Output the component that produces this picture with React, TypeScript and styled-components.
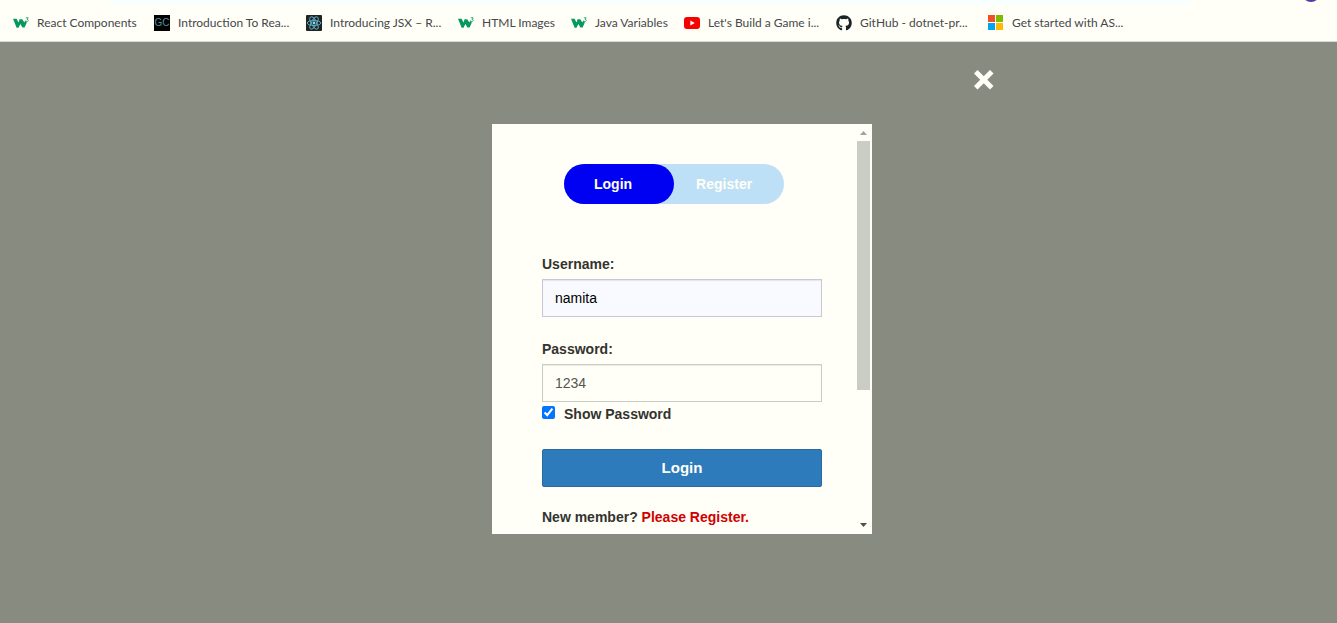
import React, { useState } from "react";
import styled, { createGlobalStyle } from "styled-components";
import { FaGithub } from "react-icons/fa";

const GlobalStyle = createGlobalStyle`
  *, *::before, *::after { box-sizing: border-box; }
  body {
    margin: 0;
    background: #888b80;
    color: #333330;
    font: 14px/20px "Liberation Sans", Arial, sans-serif;
  }
  button, input { font: inherit; }
`;

const Page = styled.div`
  display: flex;
  flex-direction: column;
  min-height: 100vh;
  overflow: hidden;
`;

const BrowserBar = styled.header`
  background: #fffff7;
  border-bottom: 1px solid #d3dcd8;
`;

const ToolbarEdge = styled.div`
  display: flex;
  height: 5px;
  padding: 0 17px 0 108px;
  overflow: hidden;
`;

const AddressField = styled.div`
  flex: 1;
  margin-right: 112px;
  background: #f7ffff;
  border-radius: 0 0 8px 8px;
`;

const Avatar = styled.div`
  width: 18px;
  height: 18px;
  margin-top: -16px;
  border-radius: 50%;
  background: #5a35b0;
`;

const Bookmarks = styled.nav`
  display: flex;
  height: 36px;
  padding: 0 13px;
  overflow: hidden;
`;

const Bookmark = styled.a<{ $size: "short" | "medium" | "long" }>`
  display: flex;
  flex: none;
  align-items: center;
  gap: 8px;
  width: ${({ $size }) => ({ short: 113, medium: 141, long: 152 })[$size]}px;
  color: #45474b;
  font: 12px/16px Lato, "Noto Sans", sans-serif;
  text-decoration: none;
  white-space: nowrap;

  svg { flex: none; }
`;

const LetterIcon = styled.span`
  flex: none;
  width: 16px;
  height: 16px;
  overflow: hidden;
  background: #000;
  color: #4f9299;
  font: 10px/16px "Liberation Sans", sans-serif;
  text-align: center;
`;

const Overlay = styled.main`
  flex: 1;
  display: flex;
  flex-direction: column;
  align-items: center;
  padding: 28px 0 28px 27px;
`;

const CloseRow = styled.div`
  display: flex;
  justify-content: flex-end;
  width: 100%;
  max-width: 624px;
  margin-bottom: 34px;
`;

const CloseButton = styled.button`
  display: flex;
  padding: 0;
  border: 0;
  background: none;
  cursor: pointer;
`;

const Dialog = styled.section`
  display: flex;
  width: 100%;
  max-width: 380px;
  height: 410px;
  overflow: hidden;
  background: #fffff7;
`;

const DialogBody = styled.div`
  flex: 1;
  padding: 40px 35px 0 50px;
`;

const Switcher = styled.div`
  position: relative;
  display: flex;
  width: 220px;
  height: 40px;
  margin: 0 auto 50px 22px;
  border-radius: 20px;
  background: #bde0f7;
`;

const SwitchHighlight = styled.span<{ $right: boolean }>`
  position: absolute;
  top: 0;
  left: ${({ $right }) => ($right ? "50%" : "0")};
  width: 50%;
  height: 100%;
  border-radius: 20px;
  background: #0000f2;
`;

const SwitchButton = styled.button`
  position: relative;
  padding: 0 0 0 30px;
  border: 0;
  background: none;
  color: #fffff7;
  font-weight: bold;
  text-align: left;
  cursor: pointer;

  & + & { margin-left: 34px; }
`;

const Field = styled.div`
  display: flex;
  flex-direction: column;
  gap: 5px;

  & + & { margin-top: 22px; }
`;

const FieldLabel = styled.label`
  font-weight: bold;
`;

const TextInput = styled.input<{ $filled?: boolean }>`
  width: 100%;
  height: 38px;
  padding: 6px 12px;
  border: 1px solid ${({ $filled }) => ($filled ? "#c9c8d4" : "#cacdc4")};
  border-radius: 0;
  outline: 0;
  background: ${({ $filled }) => ($filled ? "#f8faff" : "#fffff7")};
  box-shadow: inset 0 1px 1px rgba(0, 0, 0, 0.08);
  color: ${({ $filled }) => ($filled ? "#000" : "#555553")};
`;

const CheckLabel = styled.label`
  display: flex;
  align-items: center;
  gap: 9px;
  margin: 2px 0 25px;
  font-weight: bold;
`;

const CheckBox = styled.input`
  width: 13px;
  height: 13px;
  margin: 0 0 3px;
  accent-color: #0075ff;
`;

const SubmitButton = styled.button`
  display: block;
  width: 100%;
  height: 38px;
  border: 1px solid #286b9f;
  border-radius: 2px;
  background: #2d7bbb;
  color: #fffff7;
  font-size: 15px;
  font-weight: bold;
  cursor: pointer;
`;

const Footnote = styled.p`
  margin: 20px 0 0;
  font-weight: bold;
`;

const RegisterLink = styled.a`
  color: #d00000;
  text-decoration: none;
`;

const ScrollBar = styled.div`
  display: flex;
  flex-direction: column;
  align-items: center;
  width: 15px;
  padding-right: 2px;
`;

const ScrollArrow = styled.svg`
  flex: none;
  width: 13px;
  height: 17px;
`;

const ScrollTrack = styled.div`
  flex: 1;
  width: 100%;
`;

const ScrollThumb = styled.div`
  height: 249px;
  background: #cacdc4;
`;

const W3Icon = () => (
  <svg width="16" height="16" viewBox="0 0 16 16" aria-hidden="true">
    <path
      d="M0 3.8h3.6l1.9 3.6L6.6 4.2h2.6l2.2 3.4.8-2 1.6 1.8-2.2 5.2H9.4L7.4 9l-1.9 3.8H3.6Z"
      fill="#059862"
    />
    <path d="M12.8 2.8h2.4l-1.2 1.5c1.8 0 1.7 2.2-.1 2.2-.7 0-1.1-.3-1.2-.8" fill="none" stroke="#38a77d" />
  </svg>
);

const ReactIcon = () => (
  <svg width="16" height="16" viewBox="0 0 16 16" aria-hidden="true">
    <rect width="16" height="16" rx="1" fill="#20231f" />
    <g fill="none" stroke="#5aa9c4">
      <ellipse cx="8" cy="8" rx="6.8" ry="2.6" />
      <ellipse cx="8" cy="8" rx="6.8" ry="2.6" transform="rotate(60 8 8)" />
      <ellipse cx="8" cy="8" rx="6.8" ry="2.6" transform="rotate(120 8 8)" />
    </g>
    <circle cx="8" cy="8" r="1.4" fill="#8fd8ee" />
  </svg>
);

const YouTubeIcon = () => (
  <svg width="16" height="16" viewBox="0 0 16 16" aria-hidden="true">
    <rect y="2" width="16" height="12" rx="3" fill="#f60000" />
    <path d="m6.3 5.4 4.5 2.6-4.5 2.6Z" fill="#fff" />
  </svg>
);

const MicrosoftIcon = () => (
  <svg width="16" height="16" viewBox="0 0 16 16" aria-hidden="true">
    <path d="M0 0h7v7H0Z" fill="#f25022" />
    <path d="M8 0h7v7H8Z" fill="#7fba00" />
    <path d="M0 8h7v7H0Z" fill="#00a4ef" />
    <path d="M8 8h7v7H8Z" fill="#ffb900" />
  </svg>
);

type BookmarkItem = {
  title: string;
  icon: React.ReactNode;
  size: "short" | "medium" | "long";
};

const bookmarks: BookmarkItem[] = [
  { title: "React Components", icon: <W3Icon />, size: "medium" },
  { title: "Introduction To Rea...", icon: <LetterIcon>GC</LetterIcon>, size: "long" },
  { title: "Introducing JSX – R...", icon: <ReactIcon />, size: "long" },
  { title: "HTML Images", icon: <W3Icon />, size: "short" },
  { title: "Java Variables", icon: <W3Icon />, size: "short" },
  { title: "Let's Build a Game i...", icon: <YouTubeIcon />, size: "long" },
  { title: "GitHub - dotnet-pr...", icon: <FaGithub size={16} color="#1b2326" />, size: "long" },
  { title: "Get started with AS...", icon: <MicrosoftIcon />, size: "long" },
];

export default function App() {
  const [registering, setRegistering] = useState(false);
  const [username, setUsername] = useState("namita");
  const [password, setPassword] = useState("1234");
  const [showPassword, setShowPassword] = useState(true);

  return (
    <Page>
      <GlobalStyle />
      <BrowserBar>
        <ToolbarEdge>
          <AddressField />
          <Avatar />
        </ToolbarEdge>
        <Bookmarks aria-label="Bookmarks">
          {bookmarks.map(({ title, icon, size }) => (
            <Bookmark key={title} href="#" $size={size}>
              {icon}
              <span>{title}</span>
            </Bookmark>
          ))}
        </Bookmarks>
      </BrowserBar>

      <Overlay>
        <CloseRow>
          <CloseButton type="button" aria-label="Close">
            <svg width="20" height="20" viewBox="0 0 20 20" aria-hidden="true">
              <path
                d="M3.5 3.5 16 16M16 3.5 3.5 16"
                stroke="#fffff7"
                strokeWidth="5"
                strokeLinecap="square"
              />
            </svg>
          </CloseButton>
        </CloseRow>

        <Dialog role="dialog" aria-label="Login">
          <DialogBody>
            <Switcher>
              <SwitchHighlight $right={registering} />
              <SwitchButton type="button" onClick={() => setRegistering(false)}>Login</SwitchButton>
              <SwitchButton type="button" onClick={() => setRegistering(true)}>Register</SwitchButton>
            </Switcher>

            <form onSubmit={(event) => event.preventDefault()}>
              <Field>
                <FieldLabel htmlFor="username">Username:</FieldLabel>
                <TextInput
                  id="username"
                  $filled
                  value={username}
                  onChange={(event) => setUsername(event.target.value)}
                />
              </Field>
              <Field>
                <FieldLabel htmlFor="password">Password:</FieldLabel>
                <TextInput
                  id="password"
                  type={showPassword ? "text" : "password"}
                  value={password}
                  onChange={(event) => setPassword(event.target.value)}
                />
              </Field>
              <CheckLabel>
                <CheckBox
                  type="checkbox"
                  checked={showPassword}
                  onChange={(event) => setShowPassword(event.target.checked)}
                />
                Show Password
              </CheckLabel>
              <SubmitButton type="submit">Login</SubmitButton>
              <Footnote>
                New member? <RegisterLink href="#">Please Register.</RegisterLink>
              </Footnote>
            </form>
          </DialogBody>

          <ScrollBar aria-hidden="true">
            <ScrollArrow viewBox="0 0 13 17">
              <path d="m3 11 3.5-4 3.5 4Z" fill="#a3a59c" />
            </ScrollArrow>
            <ScrollTrack>
              <ScrollThumb />
            </ScrollTrack>
            <ScrollArrow viewBox="0 0 13 17">
              <path d="m3 6 3.5 4L10 6Z" fill="#50514c" />
            </ScrollArrow>
          </ScrollBar>
        </Dialog>
      </Overlay>
    </Page>
  );
}
